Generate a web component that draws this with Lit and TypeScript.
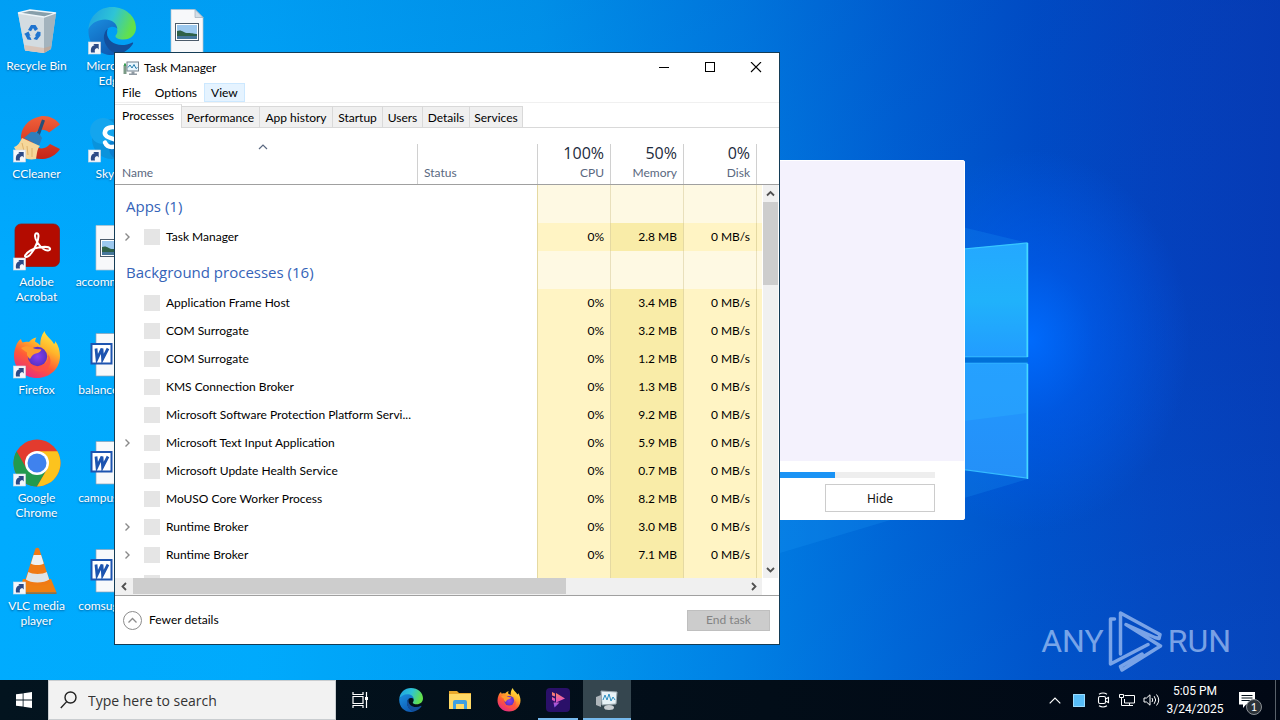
import { LitElement, html, svg, css } from "lit";
import { customElement } from "lit/decorators.js";
import { classMap } from "lit/directives/class-map.js";
import { styleMap } from "lit/directives/style-map.js";

/* ---------- icon drawings ---------- */

const shortcut = svg`
  <rect x="0.5" y="35" width="12" height="12" fill="#f4f7fb" stroke="#d5dbe4" stroke-width=".6"/>
  <path d="M3 45.500c-.6-4.500 1-6.800 3.600-7.200L5.300 37h5.400v5.400l-1.400-1.400c-2.300.5-3 2-2.300 4.500z" fill="#2c4a86"/>`;

const edgeArt = svg`
  <defs>
    <linearGradient id="e1" x1="0" y1="0" x2="1" y2="0.300"><stop offset="0" stop-color="#1d9fe4"/><stop offset=".55" stop-color="#2ec4d6"/><stop offset="1" stop-color="#62e04c"/></linearGradient>
    <linearGradient id="e2" x1="0" y1="0" x2="0.600" y2="1"><stop offset="0" stop-color="#1a8fe0"/><stop offset="1" stop-color="#0f5cb4"/></linearGradient>
  </defs>
  <path d="M0.500 22C1.500 9 11.500 0 24 0c13.500 0 24 9.500 24 20.500 0 7.500-5.500 12-12.500 12-5 0-8-1.500-8-3.200 0-1.300 1.900-2.100 1.900-5.300 0-4.500-5-9-11.400-9C10 15 3.500 18 .5 22z" fill="url(#e1)"/>
  <path d="M0.500 22C3.500 16 10 12.500 17 12.500c7 0 12 4 12.400 9.500-1.400-1.500-3.900-2.500-6.400-2-5 1-7.500 6-6.500 12 1.200 7 7 13.500 15 14.600C29 47.600 26.500 48 24 48 10.500 48-.5 37 .5 22z" fill="url(#e2)"/>
  <path d="M20 21.500c-4 2.500-5.500 9-2.500 15.500 3.500 7.500 10.500 10.500 14.500 9.500 6-1.700 10.500-5.500 13-9.800.5-.9-.3-1.500-1.200-1-3 1.600-6.300 2.300-9.800 2.300-8.500 0-15-5.500-15-12 0-1.700.3-3.200 1-4.500z" fill="#134f9c"/>`;

const firefoxArt = svg`
  <defs>
    <linearGradient id="f1" x1=".85" y1="0" x2=".3" y2="1"><stop offset="0" stop-color="#fff04a"/><stop offset=".35" stop-color="#ffb52a"/><stop offset=".65" stop-color="#ff5a36"/><stop offset="1" stop-color="#e62a83"/></linearGradient>
    <radialGradient id="f2"><stop offset="0" stop-color="#8a3ff0"/><stop offset="1" stop-color="#5a32c4"/></radialGradient>
  </defs>
  <path d="M3 15C4 12 5.500 9.500 8 8c.3 1.500.8 2.600 1.700 3.500 2-.8 4.300-1 6.300-.5 2-2.500 4.500-4 7.500-4.500-1 1.500-1.500 3-1.300 4.300 2 1 3.500 2 5 3.700 0-5.500 1-10.500 4.300-14.500C32.500 5 38 7.500 41 13c1-.3 1.400-1.700 1.200-3C45.500 14.500 47 20 47 25c0 12.500-10 22-23 22S1 37.500 1 25c0-3.700.8-7 2-10z" fill="url(#f1)"/>
  <circle cx="24.500" cy="25.500" r="9.700" fill="url(#f2)"/>
  <path d="M8 17c4-2.500 9-2.500 13 .5 2.500 1 5.500.7 7.500 1-1 3-4 3.800-6.500 4.300-3 1-3.500 3.500-5 5.200-2.500-2-3.500-4-3-6.500C12 20 9.500 18.500 8 17z" fill="#ff9b2e"/>
  <path d="M14 30c3 5 9 7 14.500 5 5-2 7.500-7 6-12 4 4 4 10 0 14.500-6 6-17 3.500-20.500-7.500z" fill="#ff4f4a" opacity=".75"/>`;

const binArt = svg`
  <path d="M5 6l38 0-5 36-7 4-19-2.500z" fill="#bfccd4"/>
  <path d="M5 6l26 4 0 36-19-2.500z" fill="#d3dce1"/>
  <path d="M31 10l12-4-5 36-7 4z" fill="#a3b3bd"/>
  <path d="M5 6l12-3 26 3-12 4z" fill="#879fab" stroke="#eef5f9" stroke-width="1.300"/>
  <path d="M11.500 38l19.500 3v5l-19-2.500z" fill="#d9bfb0" opacity=".8"/>
  <path d="M31 41l7-2-.4 3-6.600 4z" fill="#c2a593" opacity=".8"/>
  <g fill="#1f74cf"><path d="M15 23l3-5h4.500l2.500 4-3 2-2-3-2 3.200z"/><path d="M24.500 24.500l3 .5 0 3.500-3.500 4.500-3.500-1 2.500-3-1-.8z"/><path d="M18.500 33l-4-.5-2.500-5-1-.5 4.500-2.500 2 4.500-1.500-.5 1.500 2z"/></g>`;

const imageFileArt = svg`
  <path d="M8 2.500h24l8 8V47H8z" fill="#f7f8fa" stroke="#b9c1c9" stroke-width=".7"/>
  <path d="M32 2.500v8h8z" fill="#d3dde6" stroke="#9dacb9" stroke-width=".7"/>
  <rect x="12.500" y="16.500" width="23" height="17" fill="#fff" stroke="#4c5b6b"/>
  <rect x="14" y="18" width="20" height="14" fill="#9cc8ee"/>
  <path d="M14 24c5-2 6 2 11 2s6 1 9 1v3H14z" fill="#2f6148"/><path d="M14 29h20v3H14z" fill="#46769a"/>`;

const ccleanerArt = svg`
  <defs><linearGradient id="cc" x1="0" y1="0" x2="0" y2="1"><stop offset="0" stop-color="#f0603a"/><stop offset="1" stop-color="#c52418"/></linearGradient></defs>
  <path d="M47 9.500C42 3 34 0 27 1.500 15 4 7 13 8 25c1 12 11 20 22 19 7-.6 13-4 17-10l-10-5c-3 4-8 5.500-12 3.500-5-2.500-6.500-8-4-13 3-5.500 11-6.500 15-2z" fill="url(#cc)"/>
  <path d="M29 4.500l3 1L25 25l-3-1.500z" fill="#274f78"/>
  <path d="M18 17q8-1 11 6l-3 8-15-8z" fill="#2f7fbc"/>
  <path d="M9 23L27 31c-3 2.500-3 8.500-4 13C14 46 6 42 1 32c4-1 6-5 8-9z" fill="#f6d79a"/>
  <path d="M9 28l2 8M14 31l1 9M19 33l0 9" stroke="#dfb26c" fill="none"/>`;

const skypeArt = svg`
  <circle cx="24" cy="24" r="20" fill="#0a93dc"/><circle cx="15" cy="16" r="13" fill="#14a5ee"/><circle cx="33" cy="33" r="12" fill="#0b7fd0"/>
  <path d="M31 17c-1-4-5-5.500-9-4.500-5 1-7 6-3 9 3 2 8 2 10 4.500 2 3-1 6-5 6-4.500 0-6-2-7-4.500" fill="none" stroke="#fff" stroke-width="4.500" stroke-linecap="round"/>`;

const acrobatArt = svg`
  <rect x="2" y="1" width="44.500" height="42.500" rx="6" fill="#b30b00" stroke="#8f1b15" stroke-width=".8"/>
  <path d="M12.500 32c3-4.500 8-6.500 13-7.500 5-1 10.500-.8 11.500 1 .8 2.300-3.500 2.800-6.500.5-4.500-3.300-8.500-9-8.500-13 0-3.800 3.500-3.800 3.500 0 0 4.500-3.500 12.500-7 17-2.300 3-5 5-6.200 3.600-.5-.5-.4-1 .2-1.600z" fill="none" stroke="#fff" stroke-width="2" stroke-linejoin="round"/>`;

const chromeArt = svg`
  <circle cx="24" cy="24" r="23.500" fill="#e33b2e"/>
  <path d="M3.600 12.300A23.500 23.500 0 0 0 24 47.500L34.200 29.900 24 24 13.800 29.900z" fill="#229a4e"/>
  <path d="M24 47.500A23.500 23.500 0 0 0 44.400 12.300H24L34.200 29.900z" fill="#fcc31e"/>
  <circle cx="24" cy="24" r="12" fill="#fff"/><circle cx="24" cy="24" r="9.500" fill="#3f82ee"/>`;

const vlcArt = svg`
  <path d="M10 32h28l5.500 13.500H6z" fill="#ef7f12"/><path d="M6 45.500h37.500v1.300H6z" fill="#c45e05"/>
  <path d="M22.500 1.500q1.800-1.500 3.600 0L37 35c-3 4.500-22 4.500-25.500 0z" fill="#f07a14"/>
  <path d="M20.600 8h7.500l2.700 8.500c-3 2-10 2-12.900 0z" fill="#eef0f2"/>
  <path d="M15.300 25c4 2.500 14.500 2.500 18.500 0l2.400 7.500c-5 4-18.500 4-23.300 0z" fill="#dfe3e6"/>`;

const wordArt = svg`
  <path d="M8 2.500h24l8 8V45H8z" fill="#f7f9fb" stroke="#8ea0b5" stroke-width=".7"/>
  <path d="M32 2.500v8h8z" fill="#cfdae8"/>
  <rect x="3.500" y="13" width="20" height="19.500" fill="#fff" stroke="#1d54b0" stroke-width="2"/>
  <path d="M8 17.500l1 10.500 5-10.500.6 10.500 5.400-10.500" fill="none" stroke="#1d54b0" stroke-width="2.800"/>`;

const monitorArt = svg`
  <path d="M0.500 5h3v9h-3z" fill="#7b9a86"/><path d="M1 3.500h2V6H1z" fill="#3a9f55"/>
  <rect x="4" y="2" width="11.500" height="9" fill="#e9f6fd" stroke="#75828d"/>
  <path d="M5 7.500l2-2.500 2 3 2-3.500 2 4 1.500-1" fill="none" stroke="#2a7fae"/>
  <path d="M8.500 11.500h3v2H14V15H6v-1.500h2.500z" fill="#8e99a2"/>`;

interface DesktopIcon { label: string; art: unknown; link?: boolean; }

const ICONS: DesktopIcon[] = [
  { label: "Recycle Bin", art: binArt },
  { label: "CCleaner", art: ccleanerArt, link: true },
  { label: "Adobe Acrobat", art: acrobatArt, link: true },
  { label: "Firefox", art: firefoxArt, link: true },
  { label: "Google Chrome", art: chromeArt, link: true },
  { label: "VLC media player", art: vlcArt, link: true },
  { label: "Microsoft Edge", art: edgeArt, link: true },
  { label: "Skype", art: skypeArt, link: true },
  { label: "accommoda...", art: imageFileArt },
  { label: "balanceitt.rtf", art: wordArt },
  { label: "campusitt.rtf", art: wordArt },
  { label: "comsuget.rtf", art: wordArt },
  { label: "", art: imageFileArt },
];

interface Proc { name: string; mem: string; cpu?: string; disk?: string; open?: boolean; }

const APPS: Proc[] = [{ name: "Task Manager", mem: "2.8 MB", open: true }];
const BACKGROUND: Proc[] = [
  { name: "Application Frame Host", mem: "3.4 MB" },
  { name: "COM Surrogate", mem: "3.2 MB" },
  { name: "COM Surrogate", mem: "1.2 MB" },
  { name: "KMS Connection Broker", mem: "1.3 MB" },
  { name: "Microsoft Software Protection Platform Servi...", mem: "9.2 MB" },
  { name: "Microsoft Text Input Application", mem: "5.9 MB", open: true },
  { name: "Microsoft Update Health Service", mem: "0.7 MB" },
  { name: "MoUSO Core Worker Process", mem: "8.2 MB" },
  { name: "Runtime Broker", mem: "3.0 MB", open: true },
  { name: "Runtime Broker", mem: "7.1 MB", open: true },
  { name: "", mem: "", cpu: "", disk: "" },
];

const base = css`
  * { box-sizing: border-box; }
  button, input { font: inherit; color: inherit; margin: 0; padding: 0; border: 0; background: none; border-radius: 0; }
  svg { display: block; }
`;

@customElement("desktop-icons")
export class DesktopIcons extends LitElement {
  static styles = [base, css`
    :host { display: block; position: relative; height: 100%; }
    .grid { display: grid; grid-auto-flow: column; grid-template-rows: repeat(6, 108px); grid-auto-columns: 75px; justify-content: start; }
    .cell { display: flex; flex-direction: column; align-items: center; gap: 3px; padding: 7px 2px 0 0; color: #fff; font-size: 12px; line-height: 15px; text-align: center; text-shadow: 0 1px 2px rgba(0, 40, 90, .6); }
    .label { max-width: 74px; white-space: normal; }
  `];
  render() {
    return html`<div class="grid">${ICONS.map((i) => html`
      <button class="cell" aria-label=${i.label || "Picture"}>
        <svg width="48" height="48" viewBox="0 0 48 48">${i.art}${i.link ? shortcut : ""}</svg>
        <span class="label">${i.label}</span>
      </button>`)}</div>`;
  }
}

@customElement("progress-window")
export class ProgressWindow extends LitElement {
  static styles = [base, css`
    :host { display: flex; flex-direction: column; background: #fff; border-radius: 2px; border: 1px solid #fff; }
    .view { flex: 1; background: #f4f2fd; }
    .foot { padding: 11px 29px 7px; display: flex; flex-direction: column; align-items: flex-end; gap: 6px; }
    .bar { width: 100%; height: 6px; background: #eee; }
    .fill { height: 100%; background: #1a93f5; }
    .hide { width: 110px; height: 28px; border: 1px solid #ccc; font-family: "Noto Sans", sans-serif; font-size: 12px; color: #111; }
  `];
  render() {
    return html`<div class="view"></div>
      <div class="foot">
        <div class="bar" role="progressbar" aria-label="Progress" aria-valuenow="83"><div class="fill" style=${styleMap({ width: "83%" })}></div></div>
        <button class="hide">Hide</button>
      </div>`;
  }
}

@customElement("task-manager")
export class TaskManager extends LitElement {
  static styles = [base, css`
    :host { display: flex; flex-direction: column; background: #fff; border: 1px solid #143c56; font-size: 12px; line-height: 16px; color: #000; }
    .title { display: flex; align-items: center; height: 30px; padding-left: 8px; }
    .title-text { flex: 1; padding-left: 5px; }
    .cap { width: 46px; height: 30px; display: grid; place-items: center; }
    .menu { display: flex; height: 20px; border-bottom: 1px solid #f0f0f0; }
    .item { padding: 0 6px; height: 19px; border: 1px solid transparent; }
    .hot { background: #e5f3ff; border-color: #cce8ff; }
    .tabs { display: grid; grid-template-columns: 67px 78px 73px 50px 40px 47px 53px; align-items: end; height: 25px; border-bottom: 1px solid #d9d9d9; }
    .tab { height: 21px; padding-top: 2px; background: #f0f0f0; border: 1px solid #d9d9d9; border-left: 0; border-bottom: 0; }
    .selected { height: 24px; background: #fff; margin-bottom: -1px; padding: 0 0 1px; border-top-color: #e4e4e4; }
    .main { flex: 1; min-height: 0; display: flex; }
    .list { flex: 1; min-width: 0; overflow: hidden; display: flex; flex-direction: column; }
    .rows { flex: 1; min-height: 0; overflow: hidden; }
    table { width: 100%; border-collapse: separate; border-spacing: 0; table-layout: fixed; }
    th { padding: 16px 0 0; border-bottom: 1px solid #a0a0a0; font-weight: 400; color: #5a6880; text-align: right; }
    .head { height: 40px; display: flex; flex-direction: column; justify-content: space-between; padding: 0 6px 3px 7px; border-right: 1px solid #d0d0d0; }
    .left { text-align: left; }
    .sort { align-self: center; margin-right: 8px; }
    .end { justify-content: flex-end; padding-left: 6px; }
    .big { font: 16px/18px "Open Sans", sans-serif; color: #1c2a3c; }
    td { padding: 0; height: 28px; }
    .group td { height: 38px; }
    .group .group-name { padding: 4px 0 0 11px; font: 15px/20px "Open Sans", sans-serif; color: #3563b8; text-align: left; border-bottom: 0; }
    .name { display: flex; align-items: center; gap: 6px; height: 28px; padding-left: 9px; white-space: nowrap; }
    .chev { width: 8px; margin-right: 6px; }
    .pic { width: 16px; height: 16px; background: #e5e5e5; }
    .num { text-align: right; padding-right: 6px; border-right: 1px solid #e5d9a2; background: #fff4c4; }
    .mem { background: #f9eca8; }
    .rest { background: #fff4c4; }
    .group .heat { background: #fef9e3; border-right: 1px solid #e9e0bc; }
    .group .tail { background: #fef9e3; }
    .edge { border-right: 1px solid #e5d9a2; }
    .hbar { display: flex; height: 17px; background: #f0f0f0; }
    .arrow { width: 18px; height: 17px; display: grid; place-items: center; }
    .hthumb { width: 433px; background: #cdcdcd; margin-bottom: 1px; }
    .grow { flex: 1; }
    .side { width: 17px; display: flex; flex-direction: column; }
    .side-head { height: 57px; border-bottom: 1px solid #a0a0a0; }
    .vbar { flex: 1; margin: 0 1px 17px 1px; background: #f0f0f0; display: flex; flex-direction: column; }
    .vthumb { height: 83px; background: #cdcdcd; }
    .v { width: 15px; }
    .foot { display: flex; align-items: center; justify-content: space-between; height: 49px; border-top: 1px solid #a0a0a0; padding: 0 9px 0 8px; }
    .fewer { display: flex; align-items: center; gap: 7px; }
    .end-task { width: 83px; height: 21px; background: #ccc; border: 1px solid #bfbfbf; color: #838383; line-height: 18px; }
  `];

  private row(p: Proc) {
    return html`<tr>
      <td class="edge" colspan="2"><div class="name">
        <svg class="chev" width="8" height="10" viewBox="0 0 8 10">${p.open ? svg`<path d="M1.500 1.500L5 5 1.500 8.500" fill="none" stroke="#8a8a8a" stroke-width="1.400"/>` : ""}</svg>
        <span class="pic"></span><span>${p.name}</span></div></td>
      <td class="num">${p.cpu ?? "0%"}</td><td class="num mem">${p.mem}</td><td class="num">${p.disk ?? "0 MB/s"}</td><td class="rest"></td>
    </tr>`;
  }

  private group(label: string) {
    return html`<tr class="group"><th class="group-name edge" colspan="2" scope="rowgroup">${label}</th>
      <td class="heat"></td><td class="heat"></td><td class="heat"></td><td class="tail"></td></tr>`;
  }

  private arrow(d: string, cls = "") {
    return html`<span class=${classMap({ arrow: true, v: cls === "v" })}><svg width="9" height="9" viewBox="0 0 9 9"><path d=${d} fill="none" stroke="#505050" stroke-width="1.800"/></svg></span>`;
  }

  render() {
    const tabs = ["Processes", "Performance", "App history", "Startup", "Users", "Details", "Services"];
    const metrics = [["100%", "CPU"], ["50%", "Memory"], ["0%", "Disk"]];
    return html`
      <div class="title">
        <svg width="16" height="16" viewBox="0 0 16 16">${monitorArt}</svg>
        <span class="title-text">Task Manager</span>
        <button class="cap" aria-label="Minimize"><svg width="12" height="12"><path d="M1 5.500h10" stroke="#000"/></svg></button>
        <button class="cap" aria-label="Maximize"><svg width="12" height="12"><rect x="1.500" y=".5" width="9" height="9" fill="none" stroke="#000"/></svg></button>
        <button class="cap" aria-label="Close"><svg width="12" height="12"><path d="M1 0l10 10M11 0L1 10" stroke="#000" stroke-width="1.100"/></svg></button>
      </div>
      <div class="menu">
        <button class="item">File</button><button class="item">Options</button><button class="item hot">View</button>
      </div>
      <div class="tabs" role="tablist">
        ${tabs.map((t, i) => html`<button role="tab" class=${classMap({ tab: true, selected: i === 0 })}>${t}</button>`)}
      </div>
      <div class="main">
        <div class="list">
          <div class="rows">
            <table>
              <colgroup><col style=${styleMap({ width: "303px" })}><col><col style=${styleMap({ width: "73px" })}><col style=${styleMap({ width: "73px" })}><col style=${styleMap({ width: "73px" })}><col style=${styleMap({ width: "5px" })}></colgroup>
              <thead><tr>
                <th class="left"><div class="head"><svg class="sort" width="10" height="6" viewBox="0 0 10 6"><path d="M1 5l4-4 4 4" fill="none" stroke="#5a6880" stroke-width="1.200"/></svg><span>Name</span></div></th>
                <th class="left"><div class="head end"><span>Status</span></div></th>
                ${metrics.map(([v, n]) => html`<th><div class="head"><span class="big">${v}</span><span>${n}</span></div></th>`)}
                <th></th>
              </tr></thead>
              <tbody>
                ${this.group("Apps (1)")}${APPS.map((p) => this.row(p))}
                ${this.group("Background processes (16)")}${BACKGROUND.map((p) => this.row(p))}
              </tbody>
            </table>
          </div>
          <div class="hbar">${this.arrow("M6 1L2.500 4.500 6 8")}<span class="hthumb"></span><span class="grow"></span>${this.arrow("M3 1l3.500 3.500L3 8")}</div>
        </div>
        <div class="side">
          <div class="side-head"></div>
          <div class="vbar">${this.arrow("M1 6.500L4.500 3 8 6.500", "v")}<span class="vthumb"></span><span class="grow"></span>${this.arrow("M1 3l3.500 3.500L8 3", "v")}</div>
        </div>
      </div>
      <div class="foot">
        <button class="fewer"><svg width="19" height="19" viewBox="0 0 19 19"><circle cx="9.500" cy="9.500" r="9" fill="none" stroke="#8c8c8c"/><path d="M5.500 11.500l4-4 4 4" fill="none" stroke="#8c8c8c" stroke-width="1.300"/></svg><span>Fewer details</span></button>
        <button class="end-task" disabled>End task</button>
      </div>`;
  }
}

@customElement("task-bar")
export class TaskBar extends LitElement {
  static styles = [base, css`
    :host { display: flex; height: 40px; background: linear-gradient(90deg, #03141f, #020d18 60%, #010815); color: #fff; font-size: 12px; }
    .start { width: 48px; display: grid; place-items: center; }
    .search { flex: 0 0 288px; display: flex; align-items: center; gap: 11px; padding-left: 11px; background: #f2f2f2; border: 1px solid #c9cdd0; color: #333; }
    .box { flex: 1; min-width: 0; padding-top: 2px; font: 14px/20px "Open Sans", sans-serif; outline: 0; }
    .box::placeholder { color: #333; opacity: 1; }
    .apps { flex: 1; display: flex; gap: 1px; }
    .app { width: 48px; display: grid; place-items: center; position: relative; }
    .view { margin-right: 2px; }
    .running::after { content: ""; position: absolute; left: 4px; right: 4px; bottom: 0; height: 2px; background: #76b9ed; }
    .active { background: #35464f; }
    .active::after { left: 0; right: 0; }
    .tray { display: flex; align-items: center; }
    .ti { width: 24px; height: 40px; display: grid; place-items: center; }
    .clock { width: 64px; text-align: center; font: 12px/18px "Roboto", sans-serif; }
    .note { position: relative; width: 40px; height: 40px; display: grid; place-items: center; }
    .count { position: absolute; left: 19px; top: 19px; width: 16px; height: 16px; border-radius: 8px; border: 1px solid #8b9095; background: #2c3238; font-size: 11px; line-height: 14px; text-align: center; }
    .peek { width: 5px; height: 40px; border-left: 1px solid #59616a; margin-left: 8px; }
  `];
  render() {
    return html`
      <button class="start" aria-label="Start"><svg width="16" height="16" viewBox="0 0 16 16" fill="#fff"><path d="M0 2.300l6.700-.9v6.200H0zM7.500 1.300L16 0v7.600H7.500zM0 8.400h6.700v6.200L0 13.700zM7.500 8.400H16V16l-8.500-1.300z"/></svg></button>
      <label class="search">
        <svg width="17" height="18" viewBox="0 0 17 18" fill="none" stroke="#222" stroke-width="1.400"><circle cx="10.500" cy="6.500" r="5.500"/><path d="M6.700 10.600L.8 17"/></svg>
        <input class="box" type="text" placeholder="Type here to search" aria-label="Search">
      </label>
      <div class="apps">
        <button class="app view" aria-label="Task View"><svg width="17" height="16" viewBox="0 0 17 16" fill="none" stroke="#fff" stroke-width="1.200"><path d="M1 0v2.500h10V0M1 16v-2.500h10V16M1 4.500h10v7H1zM14.500 0v16"/><path d="M13 5h3v3h-3z" fill="#fff" stroke="none"/></svg></button>
        <button class="app" aria-label="Edge"><svg width="24" height="24" viewBox="0 0 48 48">${edgeArt}</svg></button>
        <button class="app" aria-label="File Explorer"><svg width="22" height="20" viewBox="0 0 22 20"><path d="M0 1h8l2 2h12v16H0z" fill="#e9a92c"/><path d="M0 4h22v15H0z" fill="#ffd966"/><path d="M4 19v-7q0-2 2-2h10q2 0 2 2v7h-3v-5H7v5z" fill="#3f9fe0"/></svg></button>
        <button class="app" aria-label="Firefox"><svg width="24" height="24" viewBox="0 0 48 48">${firefoxArt}</svg></button>
        <button class="app running" aria-label="Sandbox"><svg width="24" height="24" viewBox="0 0 24 24"><defs><linearGradient id="p" x1="0" y1="0" x2="0" y2="1"><stop offset="0" stop-color="#ff8a5c"/><stop offset=".5" stop-color="#e457b5"/><stop offset="1" stop-color="#7b54f0"/></linearGradient></defs><rect width="24" height="24" rx="4" fill="#2a1069"/><path d="M6 4l3 1.500v3L6 7.500zM10 5l9 5.500-9 4zM6 9l3 1.500v3L6 12zM7.500 14.500l6 0-5 5z" fill="url(#p)"/></svg></button>
        <button class="app running active" aria-label="Task Manager"><svg width="24" height="24" viewBox="0 0 24 24"><path d="M1 9l5-2v12l-5-2z" fill="#aeb5ba"/><path d="M6 3l16 1-1 12-14 1z" fill="#e8f2f7" stroke="#9aa7ae"/><path d="M8 12l2-5 2 5 2-6 2 7 2-4 2 3" fill="none" stroke="#2a8fc2"/><ellipse cx="14" cy="19.500" rx="5" ry="2.500" fill="#c9ced2"/></svg></button>
      </div>
      <div class="tray">
        <button class="ti" aria-label="Show hidden icons"><svg width="12" height="7"><path d="M.7 6.300L6 1l5.300 5.300" fill="none" stroke="#fff" stroke-width="1.200"/></svg></button>
        <span class="ti"><svg width="12" height="13"><path d="M0 0h12v13H0z" fill="#58bdf8"/><path d="M.5.500h11v12H.5z" fill="none" stroke="#9bdcff"/></svg></span>
        <span class="ti"><svg width="13" height="16" viewBox="0 0 13 16" fill="none" stroke="#fff" stroke-width="1.100"><rect x="1.500" y="4.500" width="7" height="7" rx="1.500"/><path d="M8.500 7l3-1.500v5l-3-1.500M2 2.200Q6-.3 10 2.200M2 13.800q4 2.500 8 0"/></svg></span>
        <span class="ti"><svg width="17" height="14" viewBox="0 0 17 14" fill="none" stroke="#fff"><path d="M5.500 2.500h10v7.500h-10V6M10.500 10v2.500M7 12.500h7"/><path d="M.5 1.500h4v3h-4zM2.500 4.500v8H7"/></svg></span>
        <span class="ti"><svg width="17" height="14" viewBox="0 0 17 14" fill="none" stroke="#fff"><path d="M1 5h2.500L7 1.800v10.400L3.500 9H1z"/><path d="M9 5q1.500 2 0 4M11.200 3.200q3 3.800 0 7.600M13.500 1.500q4.500 5.500 0 11"/></svg></span>
        <div class="clock"><div>5:05 PM</div><div>3/24/2025</div></div>
        <button class="note" aria-label="Notifications"><svg width="16" height="16" viewBox="0 0 16 16"><path d="M0 0h16v12.500H7L4 16v-3.500H0z" fill="#fff"/><path d="M2.500 3.500h11M2.500 6h11M2.500 8.500h11" stroke="#03101b"/></svg><span class="count">1</span></button>
        <span class="peek"></span>
      </div>`;
  }
}

@customElement("app-root")
export class AppRoot extends LitElement {
  static styles = [base, css`
    :host { display: flex; flex-direction: column; min-height: 100vh; font-family: "Lato", "Open Sans", sans-serif; }
    .desktop { flex: 1; position: relative; overflow: hidden;
      background:
        radial-gradient(ellipse 160px 190px at 1030px 340px, rgba(0, 108, 255, .95), rgba(0, 98, 250, .5) 40%, rgba(0, 90, 230, 0) 100%),
        linear-gradient(180deg, rgba(0, 60, 160, .1), rgba(0, 60, 160, 0) 40%, rgba(0, 190, 255, .08)),
        linear-gradient(90deg, #00aafe 0, #00a8fc 20%, #0098ef 42%, #007be2 58%, #0060d4 70%, #004cc7 81%, #0442be 90%, #063bb6 100%); }
    .wall { position: absolute; inset: 0; width: 100%; height: 100%; }
    .progress { position: absolute; left: 315px; top: 160px; width: 650px; height: 360px; }
    .manager { position: absolute; left: 114px; top: 52px; width: 666px; height: 593px; }
    .mark { position: absolute; right: 49px; bottom: 8px; display: flex; align-items: center; gap: 4px; color: rgba(200, 222, 255, .6); font: 32px/60px "Roboto", sans-serif; }
  `];
  render() {
    return html`
      <main class="desktop">
        <svg class="wall" viewBox="0 0 1280 680" preserveAspectRatio="xMidYMid slice">
          <defs>
            <linearGradient id="w1" x1="0" y1="0" x2="0" y2="1"><stop offset="0" stop-color="#24a8ff"/><stop offset=".5" stop-color="#20b2fb"/><stop offset="1" stop-color="#229cff"/></linearGradient>
            <linearGradient id="w2" x1="0" y1="0" x2="0" y2="1"><stop offset="0" stop-color="#2298ff"/><stop offset="1" stop-color="#2490f8"/></linearGradient>
          </defs>
          <path d="M900 212L1028 243V479L780 553V480z" fill="#1b9cf5" opacity=".22"/>
          <path d="M900 255L1027 243V357H900z" fill="url(#w1)" stroke="#38c8ff" stroke-width="1.200"/>
          <path d="M900 363H1027V478L900 461z" fill="url(#w2)" stroke="#35bcff" stroke-width="1.200"/>
          <path d="M900 429L1027 413V363H900z" fill="#2bb0ff" opacity=".4"/>
          <path d="M1027.500 243V357M1027.500 364V479" stroke="#45d8ff" stroke-width="1.500"/>
          <path d="M900 360H1028" stroke="#0070d8" stroke-width="5"/>
        </svg>
        <desktop-icons></desktop-icons>
        <progress-window class="progress"></progress-window>
        <task-manager class="manager"></task-manager>
        <div class="mark"><span>ANY</span>
          <svg width="56" height="62" viewBox="0 0 56 62" fill="none" stroke="#c8deff" stroke-opacity=".6" stroke-width="3.500" stroke-linejoin="round" stroke-linecap="round"><path d="M6.500 9H2.500V54L40 34.500M12.500 44V3L52 24.500 51 28.500 47 27.500 18 14.500 52.500 36 14 60 12.500 56.500 34 44"/></svg>
          <span>RUN</span></div>
      </main>
      <task-bar></task-bar>`;
  }
}
